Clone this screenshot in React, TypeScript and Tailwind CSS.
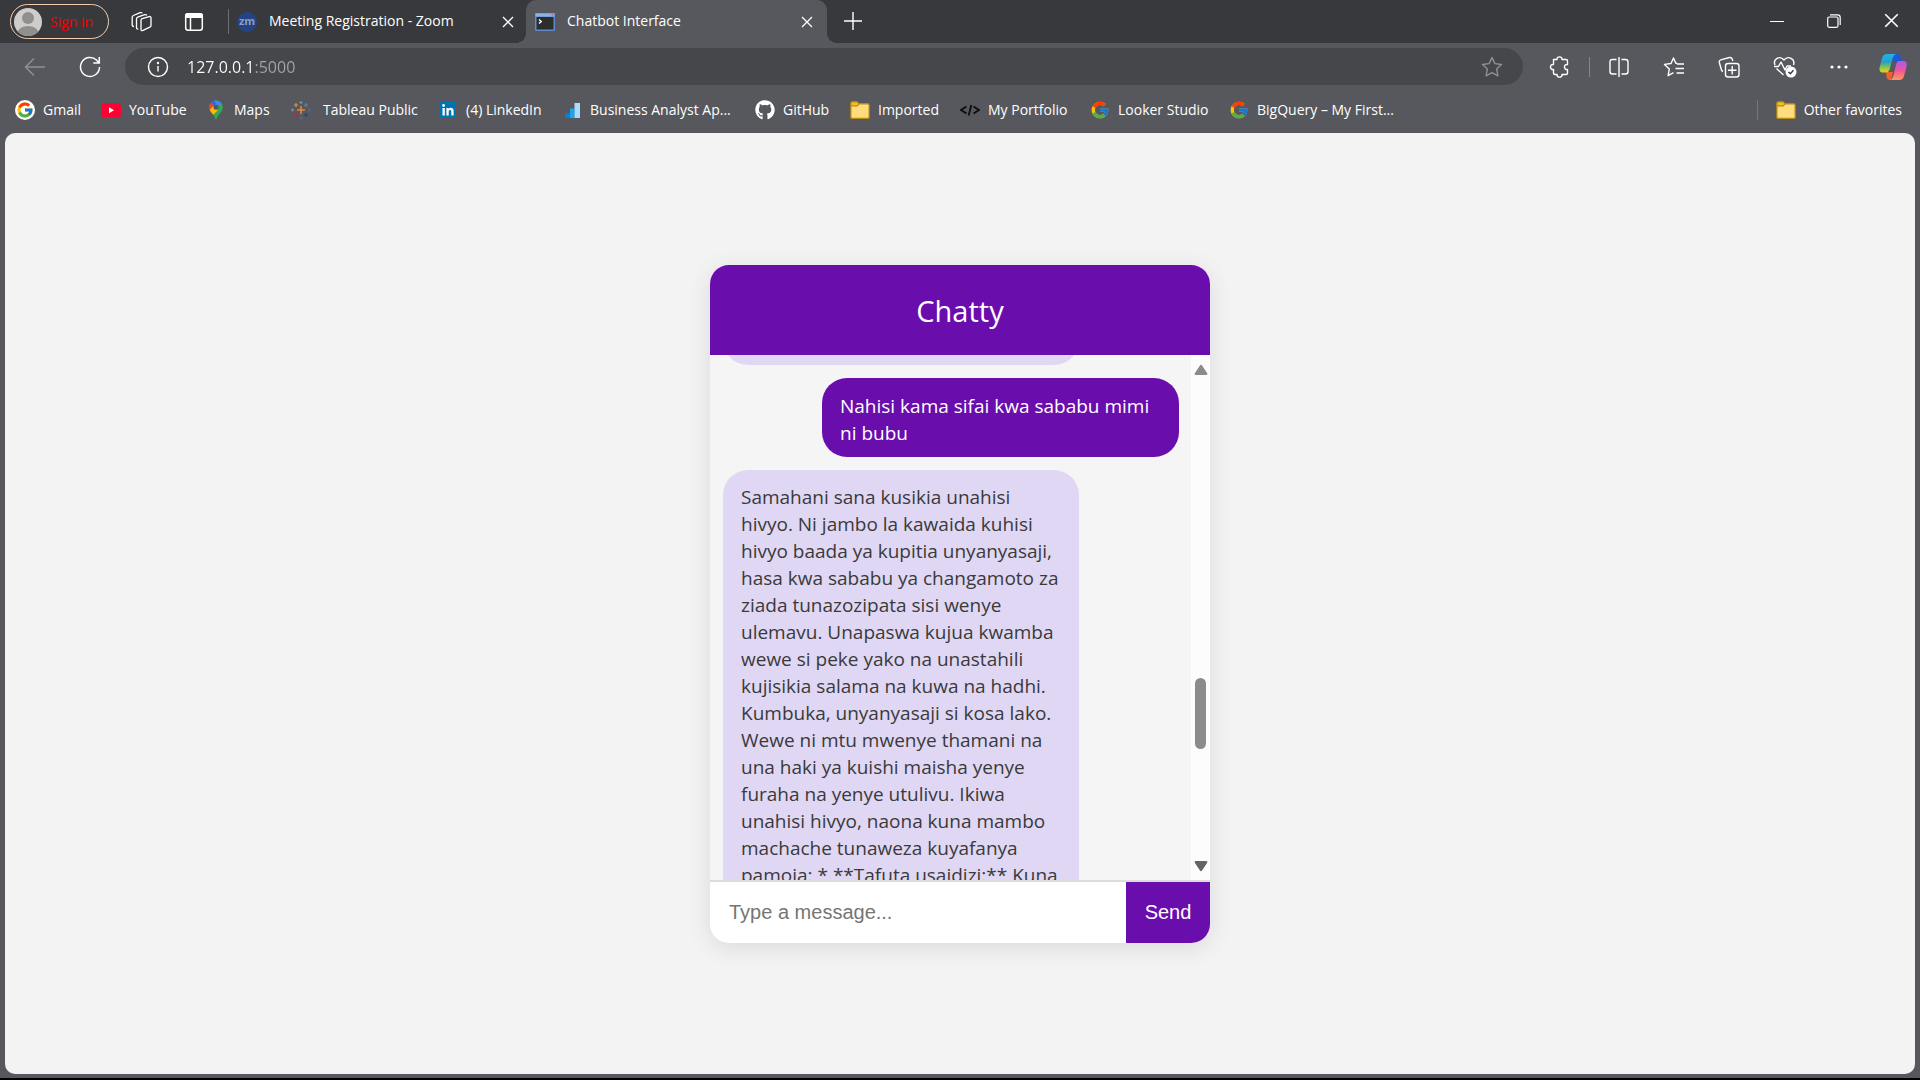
import { useState } from 'react';
import { FcGoogle } from 'react-icons/fc';
import { FaGithub } from 'react-icons/fa';

const userMessage = 'Nahisi kama sifai kwa sababu mimi\nni bubu';

const botMessage = [
  'Samahani sana kusikia unahisi',
  'hivyo. Ni jambo la kawaida kuhisi',
  'hivyo baada ya kupitia unyanyasaji,',
  'hasa kwa sababu ya changamoto za',
  'ziada tunazozipata sisi wenye',
  'ulemavu. Unapaswa kujua kwamba',
  'wewe si peke yako na unastahili',
  'kujisikia salama na kuwa na hadhi.',
  'Kumbuka, unyanyasaji si kosa lako.',
  'Wewe ni mtu mwenye thamani na',
  'una haki ya kuishi maisha yenye',
  'furaha na yenye utulivu. Ikiwa',
  'unahisi hivyo, naona kuna mambo',
  'machache tunaweza kuyafanya',
  'pamoja: * **Tafuta usaidizi:** Kuna',
].join('\n');

const CloseIcon = ({ className = '' }: { className?: string }) => (
  <svg viewBox="0 0 12 12" className={className} fill="none" stroke="currentColor" strokeWidth="1.3">
    <path d="M1 1l10 10M11 1L1 11" />
  </svg>
);

const FolderIcon = () => (
  <svg viewBox="0 0 20 20" className="size-5 shrink-0" fill="#ffdc7d" stroke="#b98c10" strokeWidth="1.2">
    <path d="M.9 4V17.2q0 1.2 1.2 1.2h15.8q1.2 0 1.2-1.2V5q0-1.2-1.2-1.2H9" />
    <path d="M.9 5.6V3q0-1.2 1.2-1.2h5L9 3.8 7.3 5.9H2.2Q.9 5.9.9 4.6z" fill="#f3c22b" />
  </svg>
);

const GmailIcon = () => (
  <span className="flex size-5 shrink-0 items-center justify-center rounded-full bg-white">
    <FcGoogle className="size-[18px]" />
  </span>
);

const YouTubeIcon = () => (
  <svg viewBox="0 0 20 20" className="size-5 shrink-0">
    <rect y="3.3" width="20" height="14" rx="3.5" fill="#f03" />
    <path d="M8 7.3v6l5-3z" fill="#fff" />
  </svg>
);

const MapsIcon = () => (
  <svg viewBox="0 0 20 20" className="size-5 shrink-0">
    <clipPath id="pin">
      <path d="M10 .5a6.8 6.8 0 0 1 6.8 6.8c0 5-5 6.2-6.1 11.6q-.7 1-1.4 0C8.2 13.500 3.2 12.3 3.2 7.3A6.8 6.8 0 0 1 10 .5z" />
    </clipPath>
    <g clipPath="url(#pin)">
      <rect width="20" height="20" fill="#34a853" />
      <path d="M6-1h16L11 7z" fill="#4285f4" />
      <path d="M2 -1h6l2 5-5 6-3-3z" fill="#1a73e8" />
      <path d="M2 2l3 1 4 3-4 6-3-3z" fill="#ea4335" />
      <path d="M3 11l4-5 5 4-6 6z" fill="#fbbc04" />
    </g>
    <circle cx="10" cy="7.2" r="2.5" fill="#55565b" />
  </svg>
);

const TableauIcon = () => (
  <svg viewBox="0 0 20 20" className="size-5 shrink-0" fill="none" strokeWidth="1.2">
    <path d="M10 6v8M6 10h8" stroke="#e8873a" strokeWidth="1.6" />
    <path d="M10 1v3M8.500 2.500h3" stroke="#6f9ba8" />
    <path d="M10 16.500v3M8.500 18h3" stroke="#5b6591" />
    <path d="M5 3v4M3 5h4" stroke="#eb912c" />
    <path d="M15 3v4M13 5h4" stroke="#59879b" />
    <path d="M5 13v4M3 15h4" stroke="#c72035" />
    <path d="M15 13v4M13 15h4" stroke="#1f457e" />
    <path d="M1.500 8.500v3M0 10h3" stroke="#7199a6" />
    <path d="M18.500 8.500v3M17 10h3" stroke="#5b6591" />
  </svg>
);

const LinkedInIcon = () => (
  <svg viewBox="0 0 20 20" className="size-5 shrink-0">
    <rect x="2" y="2" width="16" height="16" rx="1" fill="#0073b1" />
    <path d="M4.500 8h2.300v7.500H4.500zM8.400 8h2.200v1c1-1.700 5-1.800 5 1.800v4.700h-2.300v-4c0-2.200-2.600-2-2.600 0v4H8.400z" fill="#fff" />
    <circle cx="5.600" cy="5.500" r="1.400" fill="#fff" />
  </svg>
);

const AnalystIcon = () => (
  <svg viewBox="0 0 20 20" className="size-5 shrink-0">
    <path d="M3 13h5v5H3z" fill="#0a7bd8" />
    <path d="M8 8.500h4.500V18H8z" fill="#14a7f3" />
    <path d="M12.500 3H18v15h-5.500z" fill="#a9dcf8" />
  </svg>
);

const PortfolioIcon = () => (
  <svg viewBox="0 0 20 20" className="size-5 shrink-0" fill="none" stroke="#0d0d0d" strokeWidth="1.8">
    <path d="M6.500 6.500L1 10l5.500 3.500M13.500 6.500L19 10l-5.500 3.500M11.300 5L8.700 15.500" />
  </svg>
);

const GoogleIcon = () => <FcGoogle className="size-5 shrink-0" />;
const GitHubIcon = () => <FaGithub className="size-5 shrink-0" />;

const bookmarks = [
  { label: 'Gmail', Icon: GmailIcon, width: 'w-[86px]' },
  { label: 'YouTube', Icon: YouTubeIcon, width: 'w-[105px]' },
  { label: 'Maps', Icon: MapsIcon, width: 'w-[85px]' },
  { label: 'Tableau Public', Icon: TableauIcon, width: 'w-[147px]' },
  { label: '(4) LinkedIn', Icon: LinkedInIcon, width: 'w-[124px]' },
  { label: 'Business Analyst Ap...', Icon: AnalystIcon, width: 'w-[193px]' },
  { label: 'GitHub', Icon: GitHubIcon, width: 'w-[95px]' },
  { label: 'Imported', Icon: FolderIcon, width: 'w-[110px]' },
  { label: 'My Portfolio', Icon: PortfolioIcon, width: 'w-[130px]' },
  { label: 'Looker Studio', Icon: GoogleIcon, width: 'w-[139px]' },
  { label: 'BigQuery – My First...', Icon: GoogleIcon, width: 'w-[180px]' },
];

const TabStrip = () => (
  <div className="flex h-[43px] items-center bg-[#38393d]">
    <button className="ml-[10px] flex h-[35px] w-[99px] items-center gap-2 rounded-full border border-[#f3cdb0] pl-[3px] text-[14px] text-[#f00000]">
      <svg viewBox="0 0 28 28" className="size-7">
        <clipPath id="avatar"><circle cx="14" cy="14" r="14" /></clipPath>
        <g clipPath="url(#avatar)">
          <rect width="28" height="28" fill="#cfcdcb" />
          <circle cx="14" cy="10" r="6" fill="#918f8d" />
          <ellipse cx="14" cy="25" rx="10.5" ry="7" fill="#918f8d" />
        </g>
      </svg>
      Sign in
    </button>

    <button aria-label="Workspaces" className="ml-[22px]">
      <svg viewBox="0 0 22 22" className="size-[22px]" fill="none" stroke="currentColor" strokeWidth="1.3" strokeLinejoin="round">
        <path d="M10 9.300q0-1.300 1.200-1.700l7-2q1.800-.4 1.800 1.300v7.500q0 1.200-1.200 1.700l-6.800 3.300q-2 .8-2-1.200z" />
        <path d="M7.300 18q-1.800.3-1.800-1.500V8q0-1.300 1.200-1.800l7-2.500q1.500-.5 2 .8" />
        <path d="M3 15.500q-1.800 0-1.800-1.700V6.300q0-1.300 1.200-1.800l6.800-2.800q1.500-.5 2 .6" />
      </svg>
    </button>
    <button aria-label="Tab actions" className="ml-[31px]">
      <svg viewBox="0 0 20 20" className="size-5" fill="none" stroke="currentColor" strokeWidth="1.5">
        <rect x="1.700" y="1.700" width="16.600" height="16.600" rx="2.500" />
        <path d="M1.700 3.800q0-2.100 2.100-2.100h12.400q2.100 0 2.100 2.100v1.500H1.700zM3 4h14" fill="currentColor" />
        <path d="M6.500 6v12" />
      </svg>
    </button>
    <div className="ml-6 h-[25px] w-px bg-[#6d6e72]" />

    <div className="ml-2 flex w-[289px] items-center">
      <span className="flex size-5 items-center justify-center rounded-full bg-[#254382] pb-0.5 text-[11px] leading-3 font-bold text-[#8b9dc2]">zm</span>
      <span className="ml-3 flex-1 pb-0.5 text-[14px]">Meeting Registration - Zoom</span>
      <button aria-label="Close tab" className="mr-3"><CloseIcon className="size-3" /></button>
    </div>

    <div className="relative flex h-full w-[301px] items-center rounded-t-[10px] bg-[#57585d] pl-[9px]">
      {/* Flared bottom corners */}
      <span className="absolute bottom-0 -left-[10px] size-[10px] bg-[radial-gradient(circle_at_0_0,#38393d_10px,#57585d_10px)]" />
      <span className="absolute -right-[10px] bottom-0 size-[10px] bg-[radial-gradient(circle_at_100%_0,#38393d_10px,#57585d_10px)]" />
      <svg viewBox="0 0 20 18" className="h-[18px] w-5">
        <rect width="20" height="18" rx="1" fill="#5d8ccc" />
        <rect x=".5" y=".5" width="19" height="3" fill="#8ab4e8" />
        <path d="M16.500 1h2v1.500h-2z" fill="#d9667a" />
        <rect x="1.500" y="4" width="17" height="12.500" fill="#2d2d2d" />
        <path d="M4 6.500l2.300 2L4 10.500" stroke="#fff" strokeWidth="1.4" fill="none" />
      </svg>
      <span className="ml-3 flex-1 pb-0.5 text-[14px]">Chatbot Interface</span>
      <button aria-label="Close tab" className="mr-[14px]"><CloseIcon className="size-3" /></button>
    </div>

    <button aria-label="New tab" className="ml-4 pb-0.5">
      <svg viewBox="0 0 20 20" className="size-5" fill="none" stroke="currentColor" strokeWidth="1.4">
        <path d="M10 1v18M1 10h18" />
      </svg>
    </button>

    <div className="mr-[21px] ml-auto flex items-center gap-[43px] pb-0.5">
      <button aria-label="Minimize">
        <svg viewBox="0 0 14 14" className="size-[14px]" stroke="currentColor"><path d="M0 7.500h14" /></svg>
      </button>
      <button aria-label="Restore">
        <svg viewBox="0 0 14 14" className="size-[14px]" fill="none" stroke="currentColor" strokeWidth="1.2">
          <rect x=".7" y="3" width="10.300" height="10.300" rx="1.500" />
          <path d="M3 .8h7.500q2.700 0 2.700 2.700V11" />
        </svg>
      </button>
      <button aria-label="Close window"><CloseIcon className="size-[15px]" /></button>
    </div>
  </div>
);

const Toolbar = () => {
  const [url, setUrl] = useState('127.0.0.1:5000');

  return (
    <div className="flex h-[47px] items-center">
      <button aria-label="Back" className="ml-[24px] text-[#8f9093]">
        <svg viewBox="0 0 22 22" className="size-[22px]" fill="none" stroke="currentColor" strokeWidth="1.4">
          <path d="M21 11H1.500M10 2.500L1.500 11l8.500 8.500" />
        </svg>
      </button>
      <button aria-label="Refresh" className="ml-[33px]">
        <svg viewBox="0 0 22 22" className="size-[22px]" fill="none" stroke="currentColor" strokeWidth="1.5">
          <path d="M20.500 11a9.500 9.500 0 1 1-3-7l2.500 2.800M20.300 1v6h-6" />
        </svg>
      </button>

      {/* Address bar */}
      <div className="ml-6 flex h-[37px] flex-1 items-center rounded-full bg-[#46474a] pr-[20px] pl-[22px]">
        <button aria-label="Site information">
          <svg viewBox="0 0 22 22" className="size-[22px]" fill="none" stroke="currentColor" strokeWidth="1.4">
            <circle cx="11" cy="11" r="9.500" />
            <path d="M11 10v5.500" />
            <circle cx="11" cy="7" r=".5" fill="currentColor" />
          </svg>
        </button>
        {/* Host in white, port dimmed */}
        <input
          aria-label="Address"
          value={url}
          onChange={(e) => setUrl(e.target.value)}
          className="ml-[18px] min-w-0 flex-1 bg-[linear-gradient(to_right,#ffffff_67px,#a5a5a7_67px)] bg-clip-text text-[16px] text-transparent outline-none"
        />
        <button aria-label="Add to favorites" className="text-[#8f9093]">
          <svg viewBox="0 0 22 22" className="size-[22px]" fill="none" stroke="currentColor" strokeWidth="1.4" strokeLinejoin="round">
            <path d="M11 1.500l2.900 6.100 6.600.9-4.800 4.600 1.200 6.700-5.900-3.200-5.900 3.200 1.200-6.700-4.800-4.600 6.600-.9z" />
          </svg>
        </button>
      </div>

      <button aria-label="Extensions" className="ml-[26px]">
        <svg viewBox="0 0 22 22" className="size-[22px]" fill="none" stroke="currentColor" strokeWidth="1.4" strokeLinejoin="round">
          <path d="M4.500 3.500H8c-.6-3.500 5.600-3.500 5 0h4q1.500 0 1.500 1.500v3.500c-4-.6-4 5.600 0 5V17q0 1.500-1.500 1.500h-4c.6 3.500-5.600 3.500-5 0H6q-1.500 0-1.500-1.500v-3.500c-4 .6-4-5.600 0-5z" />
        </svg>
      </button>
      <div className="ml-[18px] h-5 w-px bg-[#85868a]" />
      <button aria-label="Split screen" className="ml-[18px]">
        <svg viewBox="0 0 22 22" className="size-[22px]" fill="none" stroke="currentColor" strokeWidth="1.4">
          <path d="M8.500 3.500h-4Q2 3.500 2 6v9.500Q2 18 4.500 18h4M13.500 3.500h4Q20 3.500 20 6v9.500q0 2.500-2.500 2.500h-4M11 1v20" />
        </svg>
      </button>
      <button aria-label="Favorites" className="ml-[33px]">
        <svg viewBox="0 0 22 22" className="size-[22px]" fill="none" stroke="currentColor" strokeWidth="1.4" strokeLinejoin="round">
          <path d="M14 7.500L12.700 7 10.500 2 8 7.500l-6.500.9 4.800 4.600-1.200 6.700 5.400-3M14 8h7M12.500 12.500H21M13.500 17H21" />
        </svg>
      </button>
      <button aria-label="Collections" className="ml-[33px]">
        <svg viewBox="0 0 22 22" className="size-[22px]" fill="none" stroke="currentColor" strokeWidth="1.4" strokeLinejoin="round">
          <path d="M5 15.500q-1.200-.3-1.600-1.700L1.300 6.500Q.8 4.500 2.800 3.900l8.700-2.400q2-.4 2.700 1.500l.6 2" />
          <rect x="7.500" y="7.500" width="13.500" height="13.500" rx="2.500" />
          <path d="M14.200 10v8.500M10 14.200h8.500" />
        </svg>
      </button>
      <button aria-label="Browser essentials" className="ml-[33px]">
        <svg viewBox="0 0 24 22" className="h-[22px] w-6" fill="none" stroke="currentColor" strokeWidth="1.4" strokeLinejoin="round">
          <path d="M2 9C-.5 3 7-1 11 4c4-5 11.500-1 9.500 5M3.500 12.500L10.500 19M1 10.500h4.500L8 6l4 8 2-4h4" />
          <circle cx="18" cy="16" r="5.500" fill="#fff" stroke="none" />
          <path d="M15.500 16l1.800 1.800 3.200-3.500" stroke="#38393d" />
        </svg>
      </button>
      <button aria-label="Settings and more" className="ml-[31px]">
        <svg viewBox="0 0 22 22" className="size-[22px]" fill="currentColor">
          <circle cx="4" cy="11" r="1.600" />
          <circle cx="11" cy="11" r="1.600" />
          <circle cx="18" cy="11" r="1.600" />
        </svg>
      </button>
      <button aria-label="Copilot" className="mr-[13px] ml-[29px]">
        <svg viewBox="0 0 28 28" className="size-7">
          <defs>
            <linearGradient id="cool" x1="0" y1="0" x2="0" y2="1">
              <stop offset="0" stopColor="#18b4f0" />
              <stop offset=".45" stopColor="#2b9fc0" />
              <stop offset=".75" stopColor="#8fc944" />
              <stop offset="1" stopColor="#f4cf1c" />
            </linearGradient>
            <linearGradient id="warm" x1="0" y1="0" x2="0" y2="1">
              <stop offset="0" stopColor="#a45cf5" />
              <stop offset=".5" stopColor="#f0559a" />
              <stop offset="1" stopColor="#ff9a5a" />
            </linearGradient>
          </defs>
          <path d="M13 1h5q3 0 4 3l1 4h-5q-3 0-4 3z" fill="#1e58d4" />
          <path d="M7 19h7l-2 8h-1q-3 0-3.500-3z" fill="#f0602c" />
          <path d="M8 1h9q-2.500 1-3.300 4l-3 11q-1 3.500-4 3.500H3.500Q-.3 19.500.7 14L3 5Q4.300 1 8 1z" fill="url(#cool)" />
          <path d="M20 8h4.500q4.200 0 3 5.500l-2.300 9Q24 27 20 27h-9q2.500-1 3.300-4l2.700-11q1-4 3-4z" fill="url(#warm)" />
        </svg>
      </button>
    </div>
  );
};

const BookmarksBar = () => (
  <nav className="flex h-[43px] items-center pb-1 text-[14px] whitespace-nowrap">
    <div className="flex flex-1 pl-[15px]">
      {bookmarks.map(({ label, Icon, width }) => (
        <a key={label} href="#" className={`flex shrink-0 items-center ${width} ${label === 'Tableau Public' ? 'gap-3' : 'gap-2'}`}>
          <Icon />
          {label}
        </a>
      ))}
    </div>
    <a href="#" className="mr-[18px] flex h-5 items-center gap-2 border-l border-[#77787c] pl-[18px]">
      <FolderIcon />
      Other favorites
    </a>
  </nav>
);

const Chat = () => {
  const [draft, setDraft] = useState('');

  return (
    <section className="flex h-[678px] w-[500px] flex-col overflow-hidden rounded-[19px] bg-white shadow-[0_5px_25px_rgba(0,0,0,0.1)]">
      <h1 className="flex h-[90px] shrink-0 items-center justify-center bg-[#6a0dad] pt-0.5 text-[29px] text-white">Chatty</h1>

      <div className="flex min-h-0 flex-1 bg-[#f5f5f5] text-[19px] leading-[27px]">
        <div className="flex min-h-0 flex-1 flex-col items-start gap-[13px] overflow-hidden pr-3 pl-[13px] whitespace-pre">
          {/* Tail of the message scrolled out of view */}
          <div className="-mt-10 h-[50px] w-[356px] shrink-0 rounded-[25px] bg-[#e0d7f5]" />
          <p className="w-[357px] shrink-0 self-end rounded-[25px] bg-[#6a0dad] px-[18px] pt-[15px] pb-[10px] text-white">{userMessage}</p>
          <p className="w-[356px] shrink-0 rounded-[25px] bg-[#e0d7f5] px-[18px] pt-[14px] pb-3 text-[#3a3a3a]">{botMessage}</p>
        </div>

        {/* Scrollbar */}
        <div className="flex w-[19px] flex-col items-center bg-[#fcfcfc] pt-[9px] pb-2">
          <svg viewBox="0 0 14 12" className="h-3 w-[14px] shrink-0" fill="#8b8b8b"><path d="M5.800 1.700q1.200-1.700 2.400 0l5 7.500q.7 1.600-1 1.800H1.800Q.1 10.800.8 9.200z" /></svg>
          <div className="flex-[302]" />
          <div className="h-[71px] w-[11px] rounded-full bg-[#8b8b8b]" />
          <div className="flex-[111]" />
          <svg viewBox="0 0 14 12" className="h-3 w-[14px] shrink-0" fill="#636363"><path d="M5.800 10.300q1.200 1.700 2.400 0l5-7.500q.7-1.600-1-1.800H1.800Q.1 1.200.8 2.800z" /></svg>
        </div>
      </div>

      <form
        onSubmit={(e) => {
          e.preventDefault();
          setDraft('');
        }}
        className="flex h-[63px] shrink-0 border-t-2 border-[#dddddd] font-['Liberation_Sans',sans-serif] text-[20px]"
      >
        <input
          aria-label="Message"
          value={draft}
          onChange={(e) => setDraft(e.target.value)}
          placeholder="Type a message..."
          className="min-w-0 flex-1 px-[19px] text-[#333333] outline-none placeholder:text-[#757575]"
        />
        <button type="submit" className="w-[84px] bg-[#6a0dad] text-white">Send</button>
      </form>
    </section>
  );
};

export default function App() {
  return (
    <div className="flex min-h-screen flex-col border-b-2 border-black bg-[#57585d] font-['Open_Sans',sans-serif] text-white">
      <TabStrip />
      <Toolbar />
      <BookmarksBar />
      <main className="mx-[5px] mb-1 flex flex-1 items-center justify-center rounded-[10px] bg-[#f3f3f3]">
        <Chat />
      </main>
    </div>
  );
}
